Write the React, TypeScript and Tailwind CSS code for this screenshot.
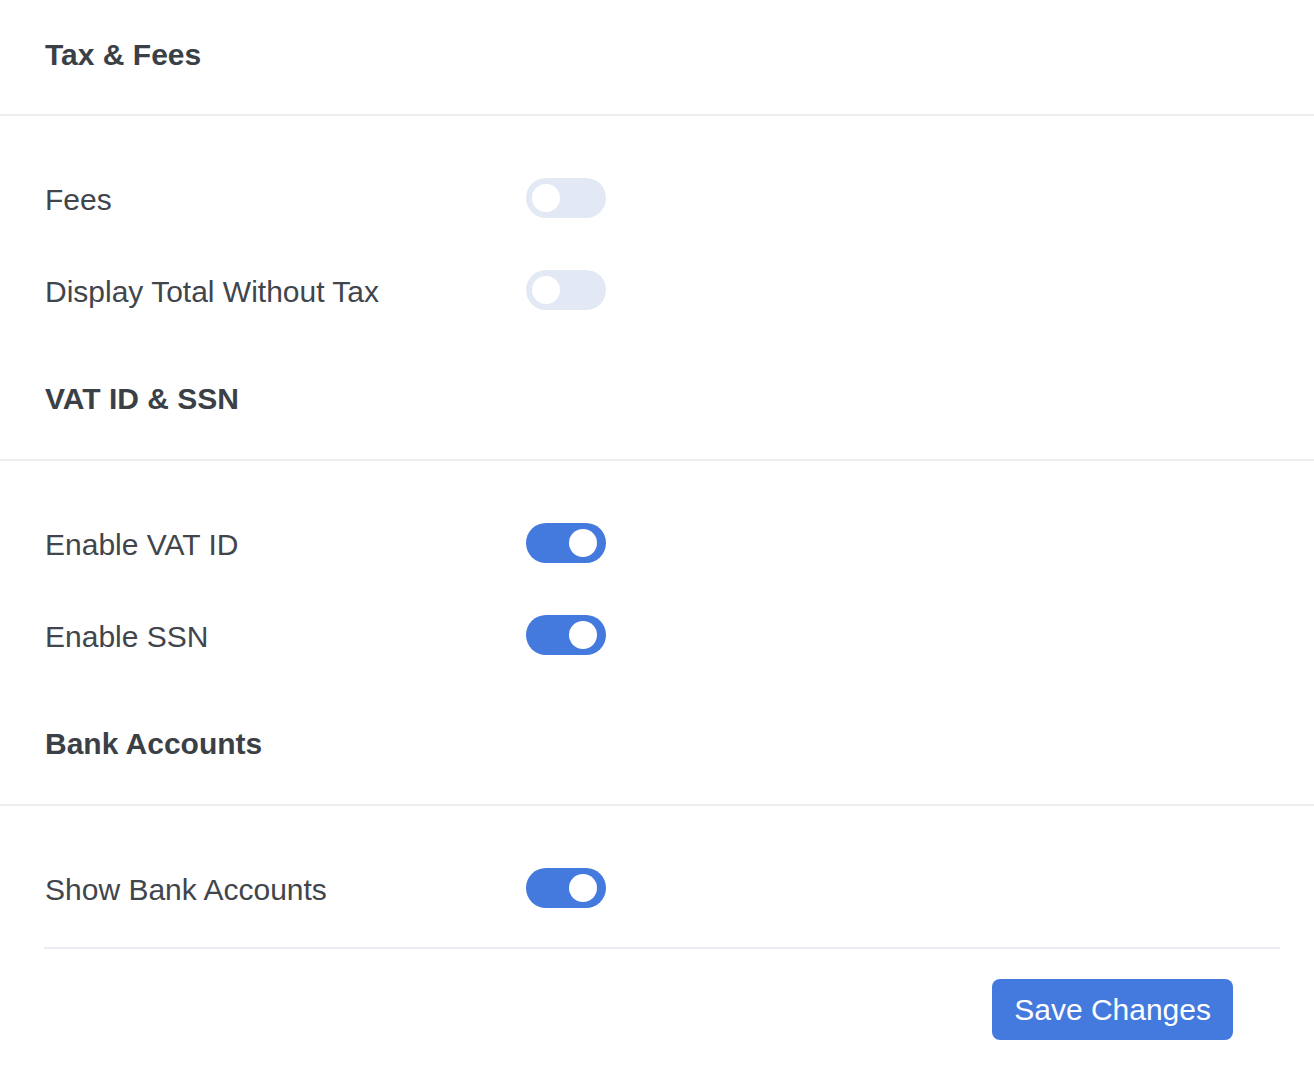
import React from "react";

function Toggle({ on }: { on: boolean }) {
  return (
    <div
      className={
        "flex h-[40px] w-[80px] items-center rounded-full " +
        (on ? "justify-end bg-[#4479de] pr-[9px]" : "justify-start bg-[#e3e9f4] pl-[6px]")
      }
    >
      <div className="h-[28px] w-[28px] rounded-full bg-white" />
    </div>
  );
}

function Heading({ children }: { children: React.ReactNode }) {
  return (
    <div className="border-b-2 border-[#eceef1] pl-[45px] pt-[37px] pb-[42px]">
      <h2 className="text-[30px] font-bold leading-[36px] text-[#3b3f46]">{children}</h2>
    </div>
  );
}

function Row({ label, on }: { label: string; on: boolean }) {
  return (
    <div className="flex items-center pl-[45px]">
      <div className="w-[481px] pt-[3px] text-[30px] leading-[36px] text-[#41454c]">{label}</div>
      <Toggle on={on} />
    </div>
  );
}

export default function App() {
  return (
    <div
      className="min-h-[1084px] w-full bg-white"
      style={{ fontFamily: '"Liberation Sans", Arial, Helvetica, sans-serif' }}
    >
      <div className="border-b-2 border-[#eceef1] pl-[45px] pt-[37px] pb-[41px]">
        <h2 className="text-[30px] font-bold leading-[36px] text-[#3b3f46]">Tax &amp; Fees</h2>
      </div>
      <div className="flex flex-col gap-[52px] pt-[62px] pb-[34px]">
        <Row label="Fees" on={false} />
        <Row label="Display Total Without Tax" on={false} />
      </div>
      <Heading>VAT ID &amp; SSN</Heading>
      <div className="flex flex-col gap-[52px] pt-[62px] pb-[34px]">
        <Row label="Enable VAT ID" on={true} />
        <Row label="Enable SSN" on={true} />
      </div>
      <Heading>Bank Accounts</Heading>
      <div className="flex flex-col pt-[62px] pb-[39px]">
        <Row label="Show Bank Accounts" on={true} />
      </div>
      <div className="pl-[44px] pr-[34px]">
        <div className="border-t-2 border-[#e9edf3] pt-[30px] pr-[47px] flex justify-end">
          <button className="h-[61px] rounded-[8px] bg-[#447ade] px-[22px] text-[30px] leading-[36px] text-white">
            Save Changes
          </button>
        </div>
      </div>
    </div>
  );
}
